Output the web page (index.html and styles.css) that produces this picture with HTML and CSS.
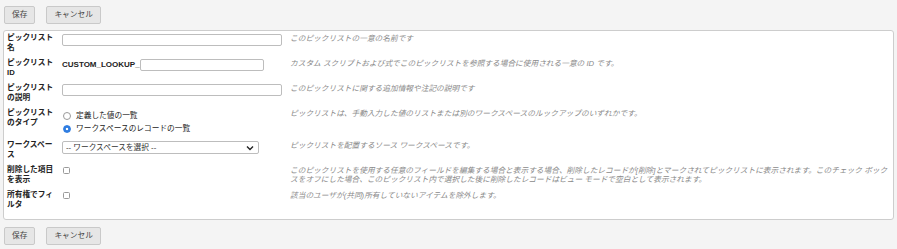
FILE: index.html
```html
<!DOCTYPE html>
<html lang="ja">
<head>
    <meta charset="UTF-8">
    <meta name="viewport" content="width=device-width, initial-scale=1.0">
    <title>ピックリスト</title>
    <link rel="stylesheet" href="styles.css">
</head>
<body>
    <div class="button-bar">
        <button type="button" class="btn">保存</button>
        <button type="button" class="btn">キャンセル</button>
    </div>

    <div class="panel">
        <div class="row">
            <div class="label">ピックリスト名</div>
            <div class="field"><input type="text" class="text-input name-input"></div>
            <div class="help">このピックリストの一意の名前です</div>
        </div>

        <div class="row">
            <div class="label">ピックリスト ID</div>
            <div class="field">
                <span class="prefix">CUSTOM_LOOKUP_</span>
                <input type="text" class="text-input id-input">
            </div>
            <div class="help">カスタム スクリプトおよび式でこのピックリストを参照する場合に使用される一意の <i>ID</i> です。</div>
        </div>

        <div class="row">
            <div class="label">ピックリストの説明</div>
            <div class="field"><input type="text" class="text-input name-input"></div>
            <div class="help">このピックリストに関する追加情報や注記の説明です</div>
        </div>

        <div class="row row-type">
            <div class="label">ピックリストのタイプ</div>
            <div class="field radio-group">
                <label class="radio-line"><input type="radio" name="type" class="radio">定義した値の一覧</label>
                <label class="radio-line"><input type="radio" name="type" class="radio" checked>ワークスペースのレコードの一覧</label>
            </div>
            <div class="help">ピックリストは、手動入力した値のリストまたは別のワークスペースのルックアップのいずれかです。</div>
        </div>

        <div class="row">
            <div class="label">ワークスペース</div>
            <div class="field">
                <div class="select-wrap">
                    <select class="select">
                        <option>-- ワークスペースを選択 --</option>
                    </select>
                    <svg class="chevron" width="8" height="6" viewBox="0 0 8 6">
                        <path d="M1 1.5 L4 4.5 L7 1.5" fill="none" stroke="#222" stroke-width="1.4"/>
                    </svg>
                </div>
            </div>
            <div class="help">ピックリストを配置するソース ワークスペースです。</div>
        </div>

        <div class="row">
            <div class="label">削除した項目を表示</div>
            <div class="field"><input type="checkbox" class="check"></div>
            <div class="help">このピックリストを使用する任意のフィールドを編集する場合と表示する場合、削除したレコードが[削除]とマークされてピックリストに表示されます。このチェック ボックスをオフにした場合、このピックリスト内で選択した後に削除したレコードはビュー モードで空白として表示されます。</div>
        </div>

        <div class="row">
            <div class="label">所有権でフィルタ</div>
            <div class="field"><input type="checkbox" class="check"></div>
            <div class="help">該当のユーザが(共同)所有していないアイテムを除外します。</div>
        </div>
    </div>

    <div class="button-bar">
        <button type="button" class="btn">保存</button>
        <button type="button" class="btn">キャンセル</button>
    </div>
</body>
</html>
```

FILE: styles.css
```css
* {
    box-sizing: border-box;
    margin: 0;
    padding: 0;
}

body {
    font-family: "Liberation Sans", "Noto Sans CJK JP", sans-serif;
    font-size: 7.7px;
    line-height: 9.5px;
    color: #222;
    background: #f4f4f4;
    padding: 6px 3px 0;
}

.button-bar {
    display: flex;
    gap: 11px;
    padding-left: 1px;
}

.btn {
    font: inherit;
    height: 18px;
    padding: 0 7px;
    color: #444;
    background: #e6e6e6;
    border: 1px solid #c9c9c9;
    border-radius: 2px;
}

.panel {
    margin: 6px 0 7px;
    padding: 1px 3px 5px;
    background: #fff;
    border: 1px solid #cdcdcd;
    border-radius: 3px;
}

.row {
    display: grid;
    grid-template-columns: 50px 223px 600px;
    column-gap: 5px;
    align-items: start;
    padding: 1px 0 4px;
    min-height: 25px;
}

.row-type {
    min-height: 32px;
}

.label {
    font-weight: bold;
}

.field {
    display: flex;
    align-items: center;
    padding-top: 1px;
}

.text-input {
    height: 12px;
    border: 1px solid #bdbdbd;
    border-radius: 2px;
    background: #fff;
}

.name-input {
    width: 220px;
}

.id-input {
    width: 124px;
}

.prefix {
    font-size: 8px;
    font-weight: bold;
    margin-right: 0.5px;
}

.help {
    color: #8a8a8a;
    font-style: italic;
    padding-top: 1px;
    line-height: 9px;
}

.radio-group {
    flex-direction: column;
    align-items: flex-start;
    gap: 2px;
    padding-top: 2px;
}

.radio-line {
    display: flex;
    align-items: center;
    height: 11px;
}

.radio {
    appearance: none;
    width: 8px;
    height: 8px;
    margin: 0 5px 0 1px;
    border: 1px solid #9a9a9a;
    border-radius: 50%;
    background: #fff;
}

.radio:checked {
    border-color: #2f7de1;
    background: radial-gradient(circle, #fff 0 1.3px, #2f7de1 1.6px);
}

.select-wrap {
    position: relative;
    width: 197px;
    height: 13px;
}

.select {
    appearance: none;
    width: 100%;
    height: 100%;
    font: inherit;
    color: #333;
    padding: 0 14px 0 3px;
    border: 1px solid #bdbdbd;
    border-radius: 2px;
    background: #fff;
}

.chevron {
    position: absolute;
    right: 5px;
    top: 4px;
    pointer-events: none;
}

.check {
    appearance: none;
    width: 7px;
    height: 7px;
    margin: 1px 0 0 1px;
    border: 1px solid #9a9a9a;
    border-radius: 1.5px;
    background: #fff;
}
```
